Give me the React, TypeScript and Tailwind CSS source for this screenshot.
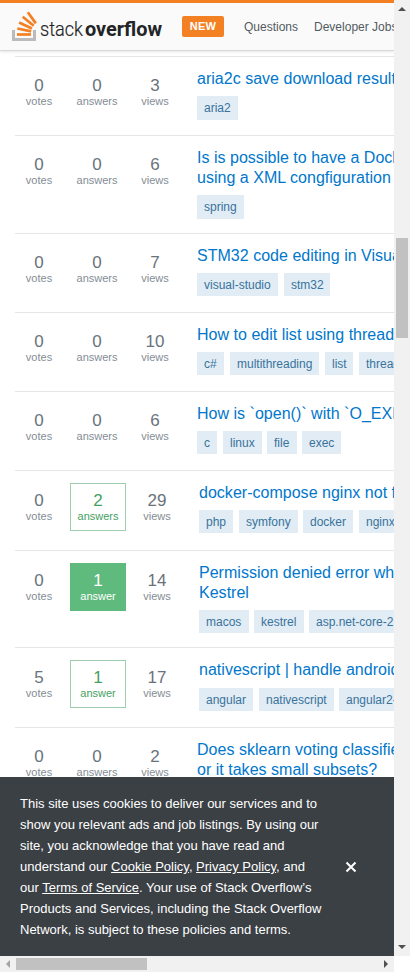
type Question = {
  votes: number;
  answers: number;
  views: number;
  title: string[];
  tags: [string, string][];
  height: string;
  tagTop?: string;
  status?: 'answered' | 'accepted';
};

const questions: Question[] = [
  { votes: 0, answers: 0, views: 3, title: ['aria2c save download results to'], tags: [['aria2', 'h-6 w-[41px]']], height: 'h-[79px]' },
  { votes: 0, answers: 0, views: 6, title: ['Is is possible to have a Docker', 'using a XML congfiguration'], tags: [['spring', 'h-6 w-[47px]']], height: 'h-[98px]' },
  { votes: 0, answers: 0, views: 7, title: ['STM32 code editing in Visual Studio'], tags: [['visual-studio', 'mr-px h-[23px] w-[81px]'], ['stm32', 'h-[23px] w-[46px]']], height: 'h-[79px]' },
  { votes: 0, answers: 0, views: 10, title: ['How to edit list using threads'], tags: [['c#', 'mr-px h-[23px] w-[27px]'], ['multithreading', 'mr-px h-[23px] w-[89px]'], ['list', 'mr-px h-[23px] w-[28px]'], ['thread-safety', 'h-[23px] w-[85px]']], height: 'h-[79px]' },
  { votes: 0, answers: 0, views: 6, title: ['How is `open()` with `O_EXEC`'], tags: [['c', 'mr-px h-[23px] w-[20px]'], ['linux', 'h-[23px] w-[39px]'], ['file', 'h-[23px] w-[30px]'], ['exec', 'h-[23px] w-[39px]']], height: 'h-[79px]' },
  { votes: 0, answers: 2, views: 29, title: ['docker-compose nginx not found'], tags: [['php', 'mr-px h-[23px] w-[34px]'], ['symfony', 'h-[23px] w-[59px]'], ['docker', 'mr-px h-[23px] w-[50px]'], ['nginx', 'h-[23px] w-[43px]']], height: 'h-[80px]', status: 'answered' },
  { votes: 0, answers: 1, views: 14, title: ['Permission denied error when', 'Kestrel'], tags: [['macos', 'h-[23px] w-[50px]'], ['kestrel', 'h-[23px] w-[50px]'], ['asp.net-core-2.0', 'h-[23px] w-[105px]']], height: 'h-[97px]', status: 'accepted' },
  { votes: 5, answers: 1, views: 17, title: ['nativescript | handle android'], tags: [['angular', 'mr-px h-[23px] w-[54px]'], ['nativescript', 'h-[23px] w-[75px]'], ['angular2-nativescript', 'h-[23px] w-[130px]']], height: 'h-[80px]', tagTop: 'mt-2', status: 'answered' },
  { votes: 0, answers: 0, views: 2, title: ['Does sklearn voting classifier', 'or it takes small subsets?'], tags: [], height: 'h-[98px]' },
];

function Stat({ value, label, className }: { value: number; label: string; className: string }) {
  return (
    <div className={`flex shrink-0 flex-col items-center ${className}`}>
      <span className="text-[17px] leading-[18px]">{value}</span>
      <span className="-mt-px text-[11px] leading-[14px]">{label}</span>
    </div>
  );
}

function QuestionRow({ q }: { q: Question }) {
  const box =
    q.status === 'accepted'
      ? 'border border-[#5fba7d] bg-[#5fba7d] text-white'
      : q.status === 'answered'
        ? 'border border-[#9fcdae] text-[#45a163]'
        : 'border border-transparent text-[#6a737c] [&>span:last-child]:text-[#848d95]';
  const plain = 'mt-px text-[#6a737c] [&>span:last-child]:text-[#848d95]';
  const pad = q.status ? 'pt-2' : 'pt-[7px]';
  return (
    <div className={`ml-[15px] flex shrink-0 border-t border-[#e4e6e8] pt-3 ${q.height}`}>
      <Stat value={q.votes} label="votes" className={`w-12 ${pad} ${plain}`} />
      <Stat
        value={q.answers}
        label={q.answers === 1 ? 'answer' : 'answers'}
        className={`ml-[7px] h-12 ${pad} ${q.status ? 'w-14' : 'w-[54px]'} ${box}`}
      />
      <Stat value={q.views} label="views" className={`ml-[7px] w-12 ${pad} ${plain}`} />
      <div className="ml-[18px] w-[500px] shrink-0">
        <h3 className="text-[16px] leading-5 tracking-[0.02px] whitespace-nowrap text-[#0077cc]">
          {q.title.map((line) => (
            <span key={line} className="block">{line}</span>
          ))}
        </h3>
        <div className={`flex gap-[5px] ${q.tagTop ?? 'mt-[7px]'}`}>
          {q.tags.map(([tag, size]) => (
            <span key={tag} className={`shrink-0 bg-[#e1ecf4] pl-[7px] text-[12px] leading-[24px] whitespace-nowrap text-[#39739d] ${size}`}>
              {tag}
            </span>
          ))}
        </div>
      </div>
    </div>
  );
}

function Logo() {
  return (
    <svg width="152" height="32" viewBox="12 10 152 32" className="ml-3 shrink-0">
      <path d="M12 29h3v8h18v-8h3v11H12z" fill="#bcbbbb" />
      <g stroke="#f48024" strokeWidth="2.7">
        <path d="M17 33.5h14" />
        <path d="M17.3 27.5l13.9 2.9" />
        <path d="M19.1 21.5l12.8 6" />
        <path d="M22.7 15.7l11 9" />
        <path d="M27.8 11.2l8 11.2" />
      </g>
      <text x="40" y="34.6" fill="#222426" fontFamily="Roboto, sans-serif" fontSize="21" fontWeight="300" stroke="#222426" strokeWidth="0.2" textLength="43" lengthAdjust="spacingAndGlyphs">stack</text>
      <text x="85" y="34.6" fill="#222426" fontFamily="Roboto, sans-serif" fontSize="21" fontWeight="700" textLength="77" lengthAdjust="spacingAndGlyphs">overflow</text>
    </svg>
  );
}

function Header() {
  return (
    <header className="z-10 flex h-[51px] shrink-0 items-center overflow-hidden border-t-[3px] border-b border-t-[#f48024] border-b-[#d6d8db] bg-[#fafafb] whitespace-nowrap shadow-[0_1px_3px_rgba(12,13,14,0.1)]">
      <Logo />
      <span className="ml-[18px] h-[21px] w-[42px] shrink-0 rounded-[2px] bg-[#f48024] text-center text-[11px] leading-[21px] font-bold tracking-[0.3px] text-white">NEW</span>
      <a className="ml-5 text-[12px] text-[#535a60]">Questions</a>
      <a className="ml-4 text-[12px] text-[#535a60]">Developer Jobs</a>
    </header>
  );
}

function CookieBanner() {
  return (
    <div className="flex h-[179px] shrink-0 items-center bg-[#3b4045] text-white">
      <p className="ml-5 w-[324px] shrink-0 text-[13px] leading-[21px] whitespace-nowrap">
        This site uses cookies to deliver our services and to<br />
        show you relevant ads and job listings. By using our<br />
        site, you acknowledge that you have read and<br />
        understand our <u>Cookie Policy</u>, <u>Privacy Policy</u>, and<br />
        our <u>Terms of Service</u>. Your use of Stack Overflow’s<br />
        Products and Services, including the Stack Overflow<br />
        Network, is subject to these policies and terms.
      </p>
      <svg width="12" height="12" viewBox="0 0 12 12" className="ml-[1px]">
        <path d="M1.5 1.5l9 9M10.5 1.5l-9 9" stroke="#fff" strokeWidth="2" />
      </svg>
    </div>
  );
}

export default function App() {
  return (
    <div className="h-[972px] w-[410px] overflow-hidden bg-white font-['Liberation_Sans',Arial,sans-serif]">
      <div className="flex h-[956px]">
        <div className="flex w-[394px] flex-col overflow-hidden">
          <Header />
          <main className="flex min-h-0 flex-1 flex-col overflow-hidden pt-[5px]">
            {questions.map((q) => <QuestionRow key={q.title[0]} q={q} />)}
          </main>
          <CookieBanner />
        </div>
        <div className="flex w-4 flex-col bg-[#f1f1f1]">
          <svg width="16" height="16"><path d="M4 11l4-4 4 4z" fill="#505050" /></svg>
          <div className="mt-[222px] ml-[2px] h-[100px] w-3 bg-[#c1c1c1]" />
          <svg width="16" height="16" className="mt-auto"><path d="M4 5l4 4 4-4z" fill="#505050" /></svg>
        </div>
      </div>
      <div className="flex h-4 w-[394px] items-center bg-[#f1f1f1]">
        <svg width="16" height="16"><path d="M10 4L6 8l4 4z" fill="#a3a3a3" /></svg>
        <div className="h-3 w-[131px] bg-[#c1c1c1]" />
        <svg width="16" height="16" className="ml-auto"><path d="M6 4l4 4-4 4z" fill="#505050" /></svg>
      </div>
    </div>
  );
}
